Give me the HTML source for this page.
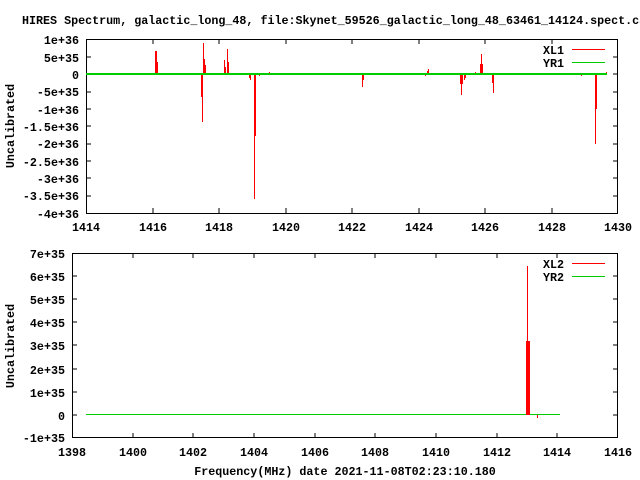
<!DOCTYPE html>
<html><head><meta charset="utf-8"><style>
html,body{margin:0;padding:0;background:#fff;width:640px;height:480px;overflow:hidden}
svg text{font-family:"Liberation Mono","DejaVu Sans Mono",monospace;font-weight:bold;font-size:11.7px;fill:#000}
</style></head><body>
<svg width="640" height="480" xmlns="http://www.w3.org/2000/svg" shape-rendering="crispEdges">
<text x="22" y="24">HIRES Spectrum, galactic_long_48, file:Skynet_59526_galactic_long_48_63461_14124.spect.cal</text>
<!-- TOP PLOT -->
<g stroke="#000" fill="none">
<rect x="86.5" y="39.5" width="531" height="174"/>
</g>
<g stroke="#000">
<path d="M86 57h5M86 74h5M86 92h5M86 109h5M86 126h5M86 144h5M86 161h5M86 178h5M86 196h5
M618 57h-5M618 74h-5M618 92h-5M618 109h-5M618 126h-5M618 144h-5M618 161h-5M618 178h-5M618 196h-5
M153 213v-5M219 213v-5M286 213v-5M352 213v-5M419 213v-5M485 213v-5M552 213v-5
M153 39v5M219 39v5M286 39v5M352 39v5M419 39v5M485 39v5M552 39v5"/>
</g>
<g text-anchor="end">
<text x="79" y="44">1e+36</text><text x="79" y="62">5e+35</text><text x="79" y="79">0</text>
<text x="79" y="96">-5e+35</text><text x="79" y="114">-1e+36</text><text x="79" y="131">-1.5e+36</text>
<text x="79" y="148">-2e+36</text><text x="79" y="166">-2.5e+36</text><text x="79" y="183">-3e+36</text>
<text x="79" y="200">-3.5e+36</text><text x="79" y="218">-4e+36</text>
</g>
<g text-anchor="middle">
<text x="86" y="231">1414</text><text x="153" y="231">1416</text><text x="219" y="231">1418</text>
<text x="286" y="231">1420</text><text x="352" y="231">1422</text><text x="419" y="231">1424</text>
<text x="485" y="231">1426</text><text x="552" y="231">1428</text><text x="618" y="231">1430</text>
</g>
<text transform="translate(14,126) rotate(-90)" text-anchor="middle">Uncalibrated</text>
<g fill="#f00">
<rect x="155" y="51" width="2" height="23"/><rect x="157" y="62" width="1" height="12"/>
<rect x="201" y="74" width="1" height="23"/><rect x="202" y="74" width="1" height="48"/>
<rect x="203" y="43" width="1" height="31"/><rect x="204" y="59" width="1" height="15"/><rect x="205" y="65" width="1" height="9"/>
<rect x="224" y="60" width="1" height="14"/><rect x="225" y="67" width="1" height="7"/><rect x="227" y="49" width="1" height="25"/><rect x="228" y="62" width="1" height="12"/>
<rect x="249" y="74" width="1" height="4"/><rect x="250" y="74" width="1" height="6"/>
<rect x="254" y="74" width="1" height="125"/><rect x="255" y="74" width="1" height="62"/>
<rect x="259" y="74" width="1" height="2"/><rect x="269" y="72" width="1" height="2"/>
<rect x="362" y="74" width="1" height="13"/><rect x="363" y="74" width="1" height="6"/>
<rect x="425" y="74" width="1" height="2"/><rect x="427" y="71" width="1" height="3"/><rect x="428" y="69" width="1" height="5"/>
<rect x="460" y="74" width="1" height="10"/><rect x="461" y="74" width="1" height="21"/><rect x="462" y="74" width="1" height="10"/>
<rect x="464" y="74" width="1" height="6"/><rect x="465" y="74" width="1" height="4"/>
<rect x="475" y="72" width="1" height="2"/>
<rect x="480" y="64" width="1" height="10"/><rect x="481" y="54" width="1" height="20"/><rect x="482" y="64" width="1" height="10"/>
<rect x="492" y="74" width="1" height="9"/><rect x="493" y="74" width="1" height="19"/>
<rect x="581" y="74" width="1" height="2"/>
<rect x="595" y="74" width="1" height="70"/><rect x="596" y="74" width="1" height="35"/>
<rect x="606" y="72" width="1" height="2"/>
</g>
<rect x="86" y="73" width="521" height="2" fill="#0c0"/>
<text x="543" y="54">XL1</text><rect x="572" y="49" width="33" height="1" fill="#f00"/>
<text x="543" y="67">YR1</text><rect x="572" y="62" width="33" height="1" fill="#0c0"/>

<!-- BOTTOM PLOT -->
<rect x="72.5" y="253.5" width="545" height="184" fill="none" stroke="#000"/>
<g stroke="#000">
<path d="M72 276h5M72 299h5M72 322h5M72 345h5M72 369h5M72 392h5M72 415h5
M618 276h-5M618 299h-5M618 322h-5M618 345h-5M618 369h-5M618 392h-5M618 415h-5
M133 438v-5M193 438v-5M254 438v-5M315 438v-5M375 438v-5M436 438v-5M497 438v-5M557 438v-5
M133 253v5M193 253v5M254 253v5M315 253v5M375 253v5M436 253v5M497 253v5M557 253v5"/>
</g>
<g text-anchor="end">
<text x="65" y="258">7e+35</text><text x="65" y="281">6e+35</text><text x="65" y="304">5e+35</text>
<text x="65" y="327">4e+35</text><text x="65" y="350">3e+35</text><text x="65" y="374">2e+35</text>
<text x="65" y="397">1e+35</text><text x="65" y="420">0</text><text x="65" y="442">-1e+35</text>
</g>
<g text-anchor="middle">
<text x="72" y="456">1398</text><text x="133" y="456">1400</text><text x="193" y="456">1402</text>
<text x="254" y="456">1404</text><text x="315" y="456">1406</text><text x="375" y="456">1408</text>
<text x="436" y="456">1410</text><text x="497" y="456">1412</text><text x="557" y="456">1414</text><text x="618" y="456">1416</text>
</g>
<text transform="translate(14,346) rotate(-90)" text-anchor="middle">Uncalibrated</text>
<text x="345" y="475" text-anchor="middle">Frequency(MHz) date 2021-11-08T02:23:10.180</text>
<rect x="86" y="414" width="474" height="1" fill="#0c0"/>
<g fill="#f00">
<rect x="527" y="266" width="1" height="149"/><rect x="526" y="341" width="4" height="74"/>
<rect x="537" y="415" width="1" height="3"/>
</g>
<text x="543" y="268">XL2</text><rect x="572" y="263" width="33" height="1" fill="#f00"/>
<text x="543" y="281">YR2</text><rect x="572" y="276" width="33" height="1" fill="#0c0"/>
</svg>
</body></html>
